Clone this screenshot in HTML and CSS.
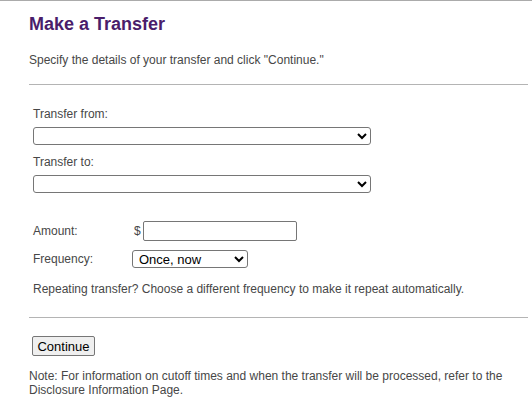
FILE: index.html
```html
<!DOCTYPE html>
<html lang="en">
<head>
<meta charset="utf-8">
<title>Make a Transfer</title>
<link rel="stylesheet" href="styles.css">
</head>
<body>
<div class="page">
  <h1 class="title">Make a Transfer</h1>
  <p class="intro">Specify the details of your transfer and click "Continue."</p>
  <hr class="rule">
  <div class="fields">
    <label class="label" for="from">Transfer from:</label>
    <select class="account" id="from"><option></option></select>
    <label class="label label2" for="to">Transfer to:</label>
    <select class="account" id="to"><option></option></select>
    <div class="grid">
      <label class="glabel" for="amount">Amount:</label>
      <div class="amount"><span class="dollar">$</span><input class="money" id="amount" type="text"></div>
      <label class="glabel" for="freq">Frequency:</label>
      <div><select class="freq" id="freq"><option>Once, now</option></select></div>
    </div>
    <p class="hint">Repeating transfer? Choose a different frequency to make it repeat automatically.</p>
  </div>
  <hr class="rule rule2">
  <div class="actions"><button class="btn" type="button">Continue</button></div>
  <p class="note">Note: For information on cutoff times and when the transfer will be processed, refer to the Disclosure Information Page.</p>
</div>
</body>
</html>
```
FILE: styles.css
```css
html, body {
  margin: 0;
  padding: 0;
  background: #fff;
}
.page {
  border-top: 1px solid #ababab;
  padding: 0 4px 0 29px;
  font-family: "Liberation Sans", Arial, sans-serif;
  font-size: 12px;
  line-height: 14px;
  color: #474747;
}
.title {
  margin: 12px 0 0;
  font-size: 18px;
  line-height: 22px;
  font-weight: bold;
  color: #4a1d6b;
}
.intro {
  margin: 18px 0 0;
}
.rule {
  margin: 17px 0 0;
  border: 0;
  border-top: 1px solid #b4b4b4;
  height: 0;
}
.fields {
  padding-left: 4px;
  display: flex;
  flex-direction: column;
  align-items: flex-start;
}
.label {
  display: block;
  margin-top: 22px;
}
.label2 {
  margin-top: 10px;
}
.account {
  margin-top: 6px;
  width: 338px;
  height: 18px;
  font-family: "Liberation Sans", Arial, sans-serif;
  font-size: 13px;
  border: 1px solid #767676;
  border-radius: 3px;
  background: #fff;
  color: #000;
  padding: 0 2px;
}
.grid {
  margin-top: 27px;
  display: grid;
  grid-template-columns: 99px auto;
  row-gap: 9px;
  align-items: center;
}
.amount {
  display: flex;
  align-items: center;
}
.dollar {
  margin-left: 2px;
  margin-right: 2px;
}
.money {
  width: 148px;
  height: 16px;
  border: 1px solid #767676;
  border-radius: 2px;
  padding: 1px 2px;
  margin-top: 1px;
  font-family: "Liberation Sans", Arial, sans-serif;
  font-size: 13px;
}
.freq {
  width: 116px;
  height: 18px;
  font-family: "Liberation Sans", Arial, sans-serif;
  font-size: 13px;
  color: #000;
  border: 1px solid #767676;
  border-radius: 3px;
  background: #fff;
  padding: 0 2px;
}
.hint {
  margin: 14px 0 0;
}
.rule2 {
  margin-top: 21px;
}
.actions {
  padding-left: 3px;
  margin-top: 18px;
}
.btn {
  width: 63px;
  height: 20px;
  padding: 0;
  font-family: "Liberation Sans", Arial, sans-serif;
  font-size: 13px;
  color: #000;
  background: #efefef;
  border: 1px solid #767676;
  border-radius: 2px;
}
.note {
  margin: 13px 0 0;
}
```
